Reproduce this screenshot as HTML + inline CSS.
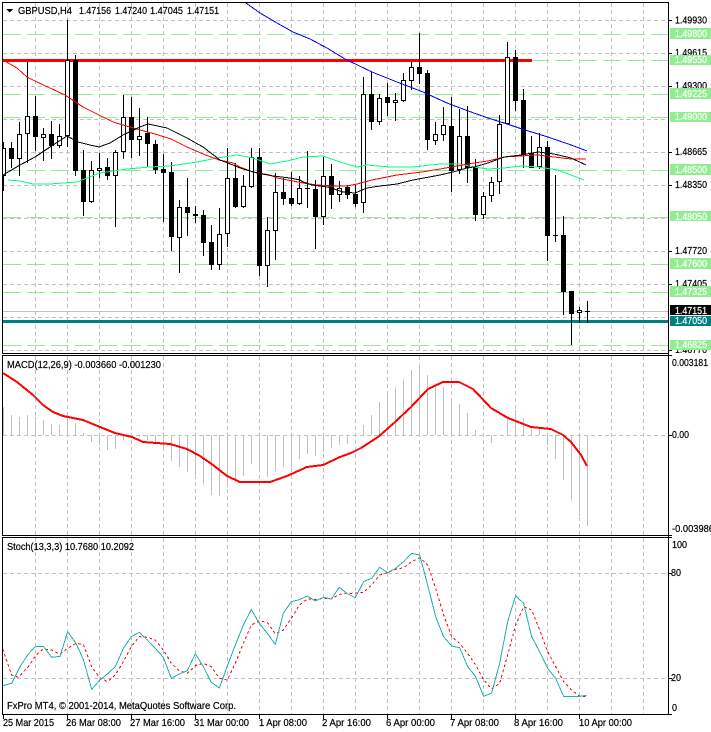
<!DOCTYPE html>
<html><head><meta charset="utf-8"><title>GBPUSD,H4</title>
<style>
html,body{margin:0;padding:0;background:#fff;width:711px;height:732px;overflow:hidden}
svg{display:block;position:absolute;left:0;top:0}
text{font-family:"Liberation Sans",sans-serif;font-size:10.5px;fill:#000;stroke:#000;stroke-width:.2}
text.w{fill:#fff;stroke:#fff}
</style></head><body>
<svg width="711" height="732" viewBox="0 0 711 732" xmlns="http://www.w3.org/2000/svg">
<defs><clipPath id="c"><rect x="3" y="3" width="665" height="350"/></clipPath></defs>
<rect width="711" height="732" fill="#fff"/>
<g shape-rendering="crispEdges">
<!-- vertical grid -->
<g stroke="#c0c0c0" fill="none" stroke-dasharray="4 3">
<path d="M35.5 3V353M67.5 3V353M99.5 3V353M131.5 3V353M163.5 3V353M195.5 3V353M227.5 3V353M259.5 3V353M291.5 3V353M323.5 3V353M355.5 3V353M387.5 3V353M419.5 3V353M451.5 3V353M483.5 3V353M515.5 3V353M547.5 3V353M579.5 3V353M611.5 3V353M643.5 3V353"/>
<path d="M35.5 356V535M67.5 356V535M99.5 356V535M131.5 356V535M163.5 356V535M195.5 356V535M227.5 356V535M259.5 356V535M291.5 356V535M323.5 356V535M355.5 356V535M387.5 356V535M419.5 356V535M451.5 356V535M483.5 356V535M515.5 356V535M547.5 356V535M579.5 356V535M611.5 356V535M643.5 356V535"/>
<path d="M35.5 538V714M67.5 538V714M99.5 538V714M131.5 538V714M163.5 538V714M195.5 538V714M227.5 538V714M259.5 538V714M291.5 538V714M323.5 538V714M355.5 538V714M387.5 538V714M419.5 538V714M451.5 538V714M483.5 538V714M515.5 538V714M547.5 538V714M579.5 538V714M611.5 538V714M643.5 538V714"/>
<path d="M3 20.5H668M3 53.5H668M3 86.5H668M3 119.5H668M3 152.5H668M3 185.5H668M3 218.5H668M3 251.5H668M3 284.5H668M3 317.5H668M3 350.5H668M3 435.5H668M3 573.5H668M3 678.5H668"/>
</g>
<!-- green levels -->
<path fill="none" stroke="#90ee90" stroke-dasharray="18 6" d="M3 34.5H668M3 60.5H668M3 94.5H668M3 117.5H668M3 170.5H668M3 217.5H668M3 264.5H668M3 292.5H668M3 345.5H668"/>
<!-- horizontal objects -->
<rect x="3" y="311" width="665" height="1" fill="#c0c0c0"/>
<rect x="3" y="59" width="529" height="3" fill="#f00"/>
<rect x="3" y="320" width="665" height="3" fill="#008080"/>
<g clip-path="url(#c)">
<!-- wicks -->
<path fill="none" stroke="#000" d="M3.5 142V191M11.5 142V168M19.5 122V176M27.5 62V163M35.5 96V151M43.5 128V161M51.5 121V159M59.5 124V148M67.5 20V147M75.5 55V176M83.5 150V216M91.5 161V203M99.5 153V178M107.5 158V180M115.5 150V227M123.5 95V159M131.5 97V158M139.5 108V156M147.5 117V167M155.5 140V174M163.5 154V222M171.5 162V251M179.5 200V273M187.5 178V236M195.5 206V223M203.5 210V256M211.5 225V270M219.5 208V270M227.5 148V247M235.5 163V208M243.5 175V208M251.5 148V188M259.5 148V276M267.5 217V287M275.5 173V260M283.5 178V205M291.5 172V206M299.5 176V205M307.5 151V208M315.5 180V249M323.5 157V225M331.5 164V209M339.5 181V202M347.5 185V199M355.5 185V207M363.5 77V213M371.5 71V130M379.5 94V125M387.5 83V116M395.5 93V121M403.5 73V102M411.5 62V90M419.5 33V84M427.5 70V150M435.5 122V145M443.5 107V141M451.5 97V192M459.5 109V174M467.5 106V183M475.5 159V221M483.5 192V219M491.5 177V202M499.5 115V194M507.5 42V124M515.5 50V111M523.5 89V168M531.5 136V168M539.5 133V169M547.5 141V261M555.5 175V242M563.5 216V315M571.5 291V345M579.5 307V323M587.5 301V323"/>
<!-- bear bodies -->
<path fill="#000" d="M9 148h5v11h-5zM33 116h5v21h-5zM49 134h5v12h-5zM73 60h5v111h-5zM81 170h5v32h-5zM105 167h5v9h-5zM129 117h5v23h-5zM145 133h5v11h-5zM153 144h5v26h-5zM161 169h5v4h-5zM169 172h5v65h-5zM185 207h5v6h-5zM193 214h5v2h-5zM201 215h5v28h-5zM209 242h5v23h-5zM233 178h5v29h-5zM257 157h5v109h-5zM281 192h5v7h-5zM289 198h5v6h-5zM305 188h5v1h-5zM313 189h5v28h-5zM329 176h5v19h-5zM345 187h5v8h-5zM353 194h5v10h-5zM369 94h5v28h-5zM385 97h5v6h-5zM417 67h5v7h-5zM425 73h5v67h-5zM449 126h5v45h-5zM465 136h5v32h-5zM473 167h5v48h-5zM513 57h5v44h-5zM521 100h5v55h-5zM529 153h5v15h-5zM545 147h5v89h-5zM553 235h5v1h-5zM561 235h5v57h-5zM569 291h5v23h-5zM585 311h5v1h-5z"/>
<!-- bull bodies -->
<path fill="#fff" stroke="#000" d="M1.5 148.5h4v27h-4zM17.5 134.5h4v24h-4zM25.5 116.5h4v17h-4zM41.5 134.5h4v3h-4zM57.5 136.5h4v9h-4zM65.5 60.5h4v75h-4zM89.5 170.5h4v31h-4zM97.5 168.5h4v2h-4zM113.5 152.5h4v23h-4zM121.5 117.5h4v34h-4zM137.5 136.5h4v3h-4zM177.5 207.5h4v30h-4zM217.5 234.5h4v30h-4zM225.5 178.5h4v55h-4zM241.5 186.5h4v20h-4zM249.5 157.5h4v29h-4zM265.5 230.5h4v35h-4zM273.5 192.5h4v38h-4zM297.5 188.5h4v15h-4zM321.5 176.5h4v40h-4zM337.5 188.5h4v6h-4zM361.5 94.5h4v108h-4zM377.5 98.5h4v23h-4zM393.5 100.5h4v2h-4zM401.5 80.5h4v20h-4zM409.5 67.5h4v13h-4zM433.5 134.5h4v6h-4zM441.5 125.5h4v9h-4zM457.5 136.5h4v33h-4zM481.5 196.5h4v18h-4zM489.5 182.5h4v13h-4zM497.5 124.5h4v57h-4zM505.5 57.5h4v66h-4zM537.5 147.5h4v19h-4zM577.5 310.5h4v2h-4z"/>
<!-- moving averages -->
<polyline fill="none" stroke="#00ff7f" points="8,180 20,181 33,184 50,184 63,183 77,182 87,178 100,173 127,169 150,167 170,166 197,162 217,158 237,155 253,158 270,164 287,161 303,157 323,156 340,162 357,167 367,165 390,167 413,167 440,164 460,164 474,167 488,169 504,168 521,166 538,167 558,170 584,180"/>
<polyline fill="none" stroke="#f00" points="3,60 17,68 27,77 37,82 50,88 65,95 83,107 99,115 113,122 123,125 140,130 155,134 171,139 187,147 203,154 219,160 233,163 240,167 253,172 270,175 277,178 288,180 303,183 317,185 333,186 347,186 357,184 372,180 397,175 422,172 440,169 474,163 488,161 504,157 521,156 538,155 554,157 571,159 586,159"/>
<polyline fill="none" stroke="#000" points="3,175 20,165 35,157 50,147 67,136 78,142 90,145 99,147 110,143 123,135 140,127 148,124 167,128 187,138 203,147 220,160 233,165 240,168 257,173 273,176 290,178 300,180 303,182 312,185 328,187 343,192 355,193 367,188 380,186 397,184 413,180 440,175 453,172 467,168 474,167 488,163 504,157 521,155 538,152 554,154 571,158 586,165"/>
<polyline fill="none" stroke="#00f" points="246,3 260,13 277,23 293,32 310,39 327,48 345,59 372,72 397,82 423,92 447,103 471,112 488,118 504,123 525,130 548,137 571,145 587,151"/>
</g>
<!-- MACD histogram -->
<path fill="none" stroke="#c0c0c0" d="M3.5 435V407M11.5 435V415M19.5 435V417M27.5 435V415M35.5 435V417M43.5 435V420M51.5 435V424M59.5 435V425M67.5 435V418M75.5 435V423M83.5 435V433M91.5 435V442M99.5 435V445M107.5 435V450M115.5 435V449M123.5 435V441M131.5 435V438M139.5 435V437M147.5 435V440M155.5 435V443M163.5 435V447M171.5 435V461M179.5 435V467M187.5 435V472M195.5 435V478M203.5 435V485M211.5 435V495M219.5 435V496M227.5 435V487M235.5 435V482M243.5 435V476M251.5 435V464M259.5 435V470M267.5 435V477M275.5 435V471M283.5 435V467M291.5 435V467M299.5 435V459M307.5 435V454M315.5 435V456M323.5 435V452M331.5 435V448M339.5 435V445M347.5 435V444M355.5 435V433M363.5 435V425M371.5 435V415M379.5 435V402M387.5 435V392M395.5 435V387M403.5 435V379M411.5 435V370M419.5 435V366M427.5 435V375M435.5 435V383M443.5 435V387M451.5 435V398M459.5 435V404M467.5 435V413M475.5 435V430M491.5 435V443M507.5 435V418M515.5 435V410M523.5 435V418M531.5 435V427M539.5 435V427M547.5 435V445M555.5 435V459M563.5 435V480M571.5 435V501M579.5 435V516M587.5 435V526"/>
<!-- MACD signal -->
<polyline fill="none" stroke="#f00" stroke-width="2" points="3,373 17,382 33,395 43,405 53,412 63,416 83,420 100,427 115,433 132,437 143,442 170,444 187,449 200,456 213,465 227,476 240,482 270,482 287,476 307,467 323,465 340,457 351,453 361,448 378,437 394,423 411,407 428,389 443,382 459,382 473,389 491,408 508,418 531,427 551,429 563,435 571,442 581,455 587,466"/>
<!-- Stoch -->
<g transform="translate(0,535) scale(.33333)" fill="none" stroke-width="3">
<polyline stroke="#f00" stroke-dasharray="8 8" points="8,342 35,420 55,427 85,395 107,362 130,342 155,345 180,358 203,340 228,325 250,328 275,395 298,427 322,440 346,420 370,380 394,335 418,305 442,307 466,315 490,345 514,385 538,407 562,415 586,392 610,385 634,395 658,430 682,435 706,385 730,325 754,270 778,258 802,262 826,297 850,285 874,250 898,210 922,192 946,194 970,190 994,192 1018,178 1042,174 1053,175 1066,174 1091,172 1115,150 1139,120 1163,113 1187,103 1211,98 1235,80 1259,68 1283,90 1307,160 1331,240 1355,305 1379,325 1403,355 1427,390 1451,435 1475,462 1499,445 1523,360 1547,270 1571,215 1595,225 1619,285 1643,350 1667,395 1691,440 1715,465 1739,484 1760,484"/>
<polyline stroke="#20b2aa" points="8,452 35,445 60,395 85,357 107,334 130,334 155,367 180,364 203,290 228,325 250,373 275,463 298,437 322,417 346,395 370,340 394,305 418,292 442,315 466,340 490,367 514,430 538,417 562,407 586,356 610,395 634,442 658,459 682,393 706,330 730,270 754,224 778,265 802,295 826,328 850,235 874,200 898,194 922,183 946,198 970,187 994,192 1018,157 1042,176 1066,188 1091,140 1115,130 1139,97 1163,113 1187,100 1211,80 1235,55 1259,60 1283,150 1307,245 1331,305 1355,333 1379,338 1403,395 1427,425 1451,484 1475,474 1499,385 1523,260 1547,182 1571,205 1595,305 1619,350 1643,400 1667,430 1691,484 1715,484 1739,484 1760,481"/>
</g>
</g>
<!-- axis text -->
<text x="675" y="23.5" textLength="32" lengthAdjust="spacingAndGlyphs">1.49930</text>
<text x="675" y="56" textLength="32" lengthAdjust="spacingAndGlyphs">1.49615</text>
<text x="675" y="89" textLength="32" lengthAdjust="spacingAndGlyphs">1.49300</text>
<text x="675" y="155" textLength="32" lengthAdjust="spacingAndGlyphs">1.48665</text>
<text x="675" y="188" textLength="32" lengthAdjust="spacingAndGlyphs">1.48350</text>
<text x="675" y="254" textLength="32" lengthAdjust="spacingAndGlyphs">1.47720</text>
<text x="675" y="287" textLength="32" lengthAdjust="spacingAndGlyphs">1.47405</text>
<text x="675" y="353" textLength="32" lengthAdjust="spacingAndGlyphs">1.46770</text>
<g shape-rendering="crispEdges">
<rect x="669" y="353" width="42" height="3" fill="#fff"/>
<!-- frames -->
<g fill="#000">
<rect x="2" y="2" width="667" height="1"/>
<rect x="2" y="2" width="1" height="352"/>
<rect x="2" y="353" width="667" height="1"/>
<rect x="2" y="355" width="667" height="1"/>
<rect x="2" y="355" width="1" height="181"/>
<rect x="2" y="535" width="667" height="1"/>
<rect x="2" y="537" width="667" height="1"/>
<rect x="2" y="537" width="1" height="178"/>
<rect x="2" y="714" width="667" height="1"/>
<rect x="668" y="2" width="1" height="713"/>
<path d="M669 20h3v1h-3zM669 53h3v1h-3zM669 86h3v1h-3zM669 152h3v1h-3zM669 185h3v1h-3zM669 251h3v1h-3zM669 284h3v1h-3zM669 350h3v1h-3zM669 355h3v1h-3zM669 435h3v1h-3zM669 535h3v1h-3zM669 537h3v1h-3zM669 573h3v1h-3zM669 678h3v1h-3zM669 714h3v1h-3z"/>
<path d="M3 715h1v4h-1zM67 715h1v4h-1zM131 715h1v4h-1zM195 715h1v4h-1zM259 715h1v4h-1zM323 715h1v4h-1zM387 715h1v4h-1zM451 715h1v4h-1zM515 715h1v4h-1zM579 715h1v4h-1z"/>
<path d="M6 9h7l-3.5 3.5z"/>
</g>
<!-- level boxes -->
<g fill="#90ee90">
<rect x="670" y="28" width="41" height="11"/>
<rect x="670" y="55" width="41" height="10"/>
<rect x="670" y="88" width="41" height="11"/>
<rect x="670" y="112" width="41" height="10"/>
<rect x="670" y="164" width="41" height="11"/>
<rect x="670" y="211" width="41" height="10"/>
<rect x="670" y="258" width="41" height="11"/>
<rect x="670" y="286" width="41" height="11"/>
<rect x="670" y="340" width="41" height="10"/>
<rect x="670" y="305" width="41" height="10" fill="#000"/>
<rect x="670" y="316" width="41" height="10" fill="#008080"/>
</g>
</g>
<text class="w" x="675" y="37" textLength="32" lengthAdjust="spacingAndGlyphs">1.49800</text>
<text class="w" x="675" y="63" textLength="32" lengthAdjust="spacingAndGlyphs">1.49550</text>
<text class="w" x="675" y="97" textLength="32" lengthAdjust="spacingAndGlyphs">1.49225</text>
<text class="w" x="675" y="120" textLength="32" lengthAdjust="spacingAndGlyphs">1.49000</text>
<text class="w" x="675" y="173" textLength="32" lengthAdjust="spacingAndGlyphs">1.48500</text>
<text class="w" x="675" y="220" textLength="32" lengthAdjust="spacingAndGlyphs">1.48050</text>
<text class="w" x="675" y="267" textLength="32" lengthAdjust="spacingAndGlyphs">1.47600</text>
<text class="w" x="675" y="295" textLength="32" lengthAdjust="spacingAndGlyphs">1.47325</text>
<text class="w" x="675" y="348" textLength="32" lengthAdjust="spacingAndGlyphs">1.46825</text>
<text class="w" x="675" y="314" textLength="32" lengthAdjust="spacingAndGlyphs">1.47151</text>
<text class="w" x="675" y="324" textLength="32" lengthAdjust="spacingAndGlyphs">1.47050</text>
<text x="672" y="366" textLength="36" lengthAdjust="spacingAndGlyphs">0.003181</text>
<text x="672" y="438" textLength="17" lengthAdjust="spacingAndGlyphs">0.00</text>
<text x="672" y="532" textLength="42" lengthAdjust="spacingAndGlyphs">-0.003986</text>
<text x="672" y="548" textLength="15" lengthAdjust="spacingAndGlyphs">100</text>
<text x="671" y="576" textLength="10" lengthAdjust="spacingAndGlyphs">80</text>
<text x="671" y="681" textLength="10" lengthAdjust="spacingAndGlyphs">20</text>
<text x="672" y="711" textLength="5" lengthAdjust="spacingAndGlyphs">0</text>
<!-- titles -->
<text x="18" y="14" textLength="54" lengthAdjust="spacingAndGlyphs">GBPUSD,H4</text>
<text x="79" y="14" textLength="32" lengthAdjust="spacingAndGlyphs">1.47156</text>
<text x="115" y="14" textLength="32" lengthAdjust="spacingAndGlyphs">1.47240</text>
<text x="150" y="14" textLength="33" lengthAdjust="spacingAndGlyphs">1.47045</text>
<text x="187" y="14" textLength="32" lengthAdjust="spacingAndGlyphs">1.47151</text>
<text x="7" y="368" textLength="154" lengthAdjust="spacingAndGlyphs">MACD(12,26,9) -0.003660 -0.001230</text>
<text x="7" y="550" textLength="127" lengthAdjust="spacingAndGlyphs">Stoch(13,3,3) 10.7680 10.2092</text>
<text x="7" y="709" textLength="229" lengthAdjust="spacingAndGlyphs">FxPro MT4, © 2001-2014, MetaQuotes Software Corp.</text>
<text x="3" y="726" textLength="51" lengthAdjust="spacingAndGlyphs">25 Mar 2015</text>
<text x="66" y="726" textLength="55" lengthAdjust="spacingAndGlyphs">26 Mar 08:00</text>
<text x="130" y="726" textLength="55" lengthAdjust="spacingAndGlyphs">27 Mar 16:00</text>
<text x="194" y="726" textLength="55" lengthAdjust="spacingAndGlyphs">31 Mar 00:00</text>
<text x="259" y="726" textLength="48" lengthAdjust="spacingAndGlyphs">1 Apr 08:00</text>
<text x="322" y="726" textLength="49" lengthAdjust="spacingAndGlyphs">2 Apr 16:00</text>
<text x="386" y="726" textLength="49" lengthAdjust="spacingAndGlyphs">6 Apr 00:00</text>
<text x="450" y="726" textLength="49" lengthAdjust="spacingAndGlyphs">7 Apr 08:00</text>
<text x="514" y="726" textLength="49" lengthAdjust="spacingAndGlyphs">8 Apr 16:00</text>
<text x="579" y="726" textLength="53" lengthAdjust="spacingAndGlyphs">10 Apr 00:00</text>
</svg>
</body></html>
